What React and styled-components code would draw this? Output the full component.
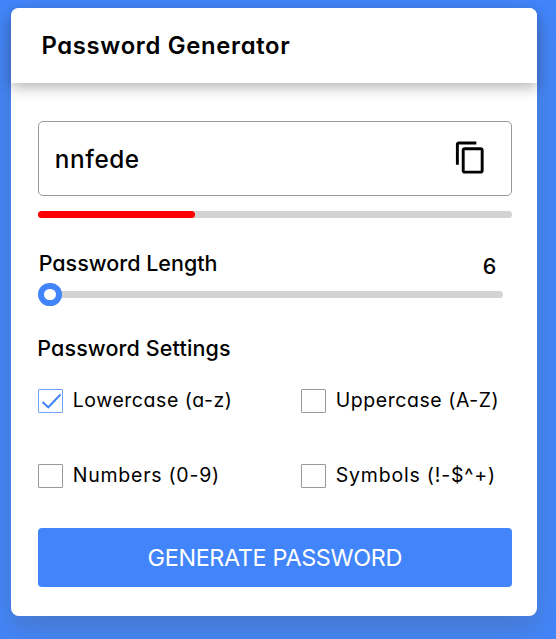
import React, { useState } from "react";
import styled, { createGlobalStyle } from "styled-components";
import { MdContentCopy } from "react-icons/md";

const blue = "#4285fa";

const GlobalStyle = createGlobalStyle`
  * { box-sizing: border-box; }
  body {
    margin: 0;
    background: ${blue};
    color: #000;
    font-family: Inter, "Open Sans", sans-serif;
    font-feature-settings: "cv11";
  }
  button, input { font: inherit; font-feature-settings: inherit; }
`;

const Page = styled.main`
  height: 639px;
  padding: 8px 19.3px 22.7px 11.4px;
  overflow: hidden;
`;

const Card = styled.section`
  height: 608.3px;
  border-radius: 8px;
  background: #fff;
  box-shadow: 0 14px 28px rgba(88, 88, 88, 0.28);
`;

const Header = styled.header`
  height: 75px;
  padding: 20px 30px 0;
  border-radius: 8px 8px 0 0;
  background: #fff;
  box-shadow: 0 5px 13px rgba(0, 0, 0, 0.27);
`;

const Title = styled.h1`
  margin: 0;
  font-size: 23.8px;
  font-weight: 600;
  line-height: 35px;
  letter-spacing: 0.7px;
  white-space: nowrap;
`;

const Body = styled.div`
  display: flex;
  flex-direction: column;
  padding: 38.3px 25px 0 26.9px;
`;

const Field = styled.div`
  display: flex;
  align-items: center;
  justify-content: space-between;
  height: 75px;
  padding: 0 23px 2px 15.5px;
  border: 1px solid #999;
  border-radius: 5px;
`;

const Password = styled.span`
  padding-top: 2px;
  font-size: 24.3px;
  font-weight: 500;
  line-height: 36px;
  letter-spacing: ${(p) => p.$spacing}px;
`;

const CopyButton = styled.button`
  display: flex;
  padding: 0;
  border: 0;
  background: none;
  color: #000;
`;

const Meter = styled.div`
  height: 7px;
  margin-top: 15px;
  border-radius: 4px;
  background: #d3d3d3;
`;

const MeterFill = styled.div`
  width: 33%;
  height: 100%;
  border-radius: 4px;
  background: red;
`;

const LengthRow = styled.div`
  display: flex;
  justify-content: space-between;
  height: 36px;
  margin-top: 29px;
  padding: 0 15.5px 0 0.4px;
`;

const Label = styled.span`
  font-size: 21.5px;
  font-weight: 500;
  line-height: 32px;
  letter-spacing: ${(p) => p.$spacing}px;
  white-space: nowrap;
`;

const LengthValue = styled.span`
  padding-top: 3px;
  font-size: 21.5px;
  font-weight: 500;
  line-height: 32px;
`;

const Slider = styled.input`
  appearance: none;
  display: block;
  width: 465px;
  height: 7.5px;
  margin: 7.3px 0 0;
  border-radius: 4px;
  background: #d3d3d3;

  &::-webkit-slider-thumb {
    appearance: none;
    width: 23.4px;
    height: 23.4px;
    border: 6px solid ${blue};
    border-radius: 50%;
    background: #fff;
  }
`;

const SettingsTitle = styled.h2`
  display: flex;
  height: 32px;
  margin: 34px 0 0 -1px;
`;

const Options = styled.div`
  display: grid;
  grid-template-columns: 263px 210px;
  row-gap: 51px;
  margin-top: 25px;
`;

const Option = styled.label`
  display: flex;
  align-items: center;
  height: 24px;
  gap: 9.7px;
`;

const Check = styled.span`
  flex: none;
  display: grid;
  place-items: center;
  width: 24.8px;
  height: 24px;
  border: 1px solid ${(p) => (p.$checked ? "#6fa2fb" : "#999")};
  border-radius: 1px;
  color: ${blue};
`;

const OptionText = styled.span`
  margin-top: -2px;
  font-size: 19.5px;
  line-height: 24px;
  letter-spacing: ${(p) => p.$spacing}px;
  white-space: nowrap;
`;

const GenerateButton = styled.button`
  height: 59px;
  margin: 39.5px 0 0 -0.4px;
  padding: 0;
  border: 0;
  border-radius: 4px;
  background: ${blue};
  color: #fff;
  font-size: 23.4px;
  line-height: 59px;
  letter-spacing: -0.35px;
  white-space: nowrap;
`;

const settings = [
  { label: "Lowercase (a-z)", spacing: 0.55 },
  { label: "Uppercase (A-Z)", spacing: 0.55 },
  { label: "Numbers (0-9)", spacing: 0.75 },
  { label: "Symbols (!-$^+)", spacing: 0.8 },
];

export default function App() {
  const [length, setLength] = useState(6);
  const [active, setActive] = useState([0]);
  const toggle = (i) =>
    setActive((a) => (a.includes(i) ? a.filter((n) => n !== i) : [...a, i]));

  return (
    <>
      <GlobalStyle />
      <Page>
        <Card>
          <Header>
            <Title>Password Generator</Title>
          </Header>
          <Body>
            <Field>
              <Password $spacing={0.6}>nnfede</Password>
              <CopyButton aria-label="Copy password">
                <MdContentCopy size={35} />
              </CopyButton>
            </Field>
            <Meter>
              <MeterFill />
            </Meter>
            <LengthRow>
              <Label $spacing={0}>Password Length</Label>
              <LengthValue>{length}</LengthValue>
            </LengthRow>
            <Slider
              type="range"
              min="6"
              max="20"
              value={length}
              aria-label="Password length"
              onChange={(e) => setLength(Number(e.target.value))}
            />
            <SettingsTitle>
              <Label $spacing={0.12}>Password Settings</Label>
            </SettingsTitle>
            <Options>
              {settings.map(({ label, spacing }, i) => (
                <Option key={label} onClick={() => toggle(i)}>
                  <Check $checked={active.includes(i)}>
                    {active.includes(i) && (
                      <svg width="23" height="22" viewBox="0 0 23 22" fill="none">
                        <path d="M3.5 12 L9.3 17.3 L21.5 4.5" stroke="currentColor" strokeWidth="2" />
                      </svg>
                    )}
                  </Check>
                  <OptionText $spacing={spacing}>{label}</OptionText>
                </Option>
              ))}
            </Options>
            <GenerateButton>GENERATE PASSWORD</GenerateButton>
          </Body>
        </Card>
      </Page>
    </>
  );
}
